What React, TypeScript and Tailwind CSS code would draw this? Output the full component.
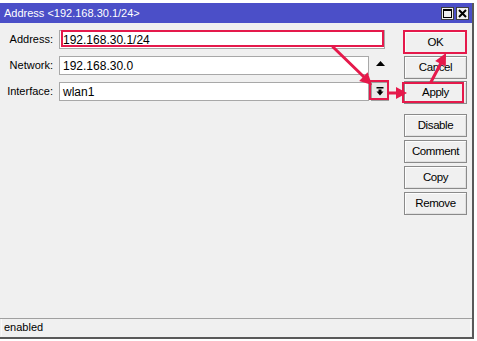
import React from "react";

const font = { fontFamily: '"Liberation Sans", Arial, sans-serif' };

function Btn({ label }: { label: string }) {
  return (
    <div className="h-[23px] w-[63px] flex items-center justify-center border border-[#8a8a8a] bg-[#f0f0f0] shadow-[inset_1px_1px_0_#fdfdfd,inset_-1px_-1px_0_#e0e0e0] text-[11.5px] tracking-[-0.4px] text-black">
      {label}
    </div>
  );
}

function Row({ label, children }: { label: string; children: React.ReactNode }) {
  return (
    <div className="flex items-center h-[19px]">
      <div className="w-[53px] text-right text-[11px] text-black">{label}</div>
      <div className="ml-[6px] flex items-center">{children}</div>
    </div>
  );
}

function Field({ value, w }: { value: string; w: string }) {
  return (
    <div className={`${w} h-[19px] bg-white border border-[#a8a8a8] flex items-center pl-[3px] text-[12px] text-black`}>
      {value}
    </div>
  );
}

export default function App() {
  return (
    <div className="relative w-[477px] h-[341px] bg-white overflow-hidden" style={font}>
      <div className="pt-[3px]">
        <div className="w-[474px] h-[336px] flex flex-col border-r-2 border-b-2 border-[#595959] bg-[#f0f0f0]">
          {/* Title bar */}
          <div className="h-[20px] bg-[#4b4fc8] flex items-start">
            <div className="pl-[4px] pt-[3px] text-white text-[11px] leading-[14px] flex-1">
              Address &lt;192.168.30.1/24&gt;
            </div>
            <div className="flex gap-[2px] pt-[4px] pr-[3px]">
              <div className="w-[13px] h-[13px] bg-[#f0f0f0] border border-[#404040] flex items-center justify-center">
                <svg width="9" height="9" viewBox="0 0 9 9">
                  <rect x="0.5" y="0.5" width="8" height="8" fill="none" stroke="#000" strokeWidth="1" />
                  <rect x="0" y="0" width="9" height="2" fill="#000" />
                </svg>
              </div>
              <div className="w-[13px] h-[13px] bg-[#f0f0f0] border border-[#404040] flex items-center justify-center">
                <svg width="9" height="9" viewBox="0 0 9 9">
                  <path d="M1 1 L8 8 M8 1 L1 8" stroke="#000" strokeWidth="2" />
                </svg>
              </div>
            </div>
          </div>

          {/* Main */}
          <div className="flex-1 flex">
            <div className="flex-1 flex flex-col gap-[7px] pt-[7px]">
              <Row label="Address:">
                <Field value="192.168.30.1/24" w="w-[326px]" />
              </Row>
              <Row label="Network:">
                <Field value="192.168.30.0" w="w-[310px]" />
                <div className="w-[20px] flex justify-center items-center ml-[1px] pb-[4px]">
                  <svg width="9" height="5" viewBox="0 0 9 5">
                    <path d="M0 5 L4.5 0 L9 5 Z" fill="#000" />
                  </svg>
                </div>
              </Row>
              <Row label="Interface:">
                <Field value="wlan1" w="w-[310px]" />
                <div className="ml-[2px] w-[18px] h-[19px] bg-[#e8e8e8] border border-[#a0a0a0] flex items-center justify-center">
                  <svg width="8" height="9" viewBox="0 0 8 9">
                    <rect x="0.5" y="0" width="7" height="1.5" fill="#000" />
                    <rect x="2.5" y="2.5" width="3" height="2.5" fill="#000" />
                    <path d="M0.5 4.5 L7.5 4.5 L4 8.5 Z" fill="#000" />
                  </svg>
                </div>
              </Row>
            </div>
            <div className="w-[68px] pt-[8px] flex flex-col">
              <div className="flex flex-col gap-[2px]">
                <Btn label="OK" />
                <Btn label="Cancel" />
                <Btn label="Apply" />
              </div>
              <div className="flex flex-col gap-[3px] mt-[10px]">
                <Btn label="Disable" />
                <Btn label="Comment" />
                <Btn label="Copy" />
                <Btn label="Remove" />
              </div>
            </div>
          </div>

          {/* Status */}
          <div className="border-t border-[#a0a0a0] pb-[1px]">
            <div className="h-[17px] ml-[1px] mr-[1px] border-l border-r border-[#fafafa] flex items-center pl-[2px] text-[11px] text-black">
              enabled
            </div>
          </div>
        </div>
      </div>

      {/* Annotations */}
      <svg className="absolute left-0 top-0 pointer-events-none" width="477" height="341" viewBox="0 0 477 341">
        <g stroke="#e5194b" fill="none" strokeWidth="2">
          <rect x="62" y="31" width="321" height="15" />
          <rect x="370" y="81" width="18" height="18" />
          <rect x="404" y="31" width="62" height="22" />
          <rect x="403" y="83" width="60" height="19" />
        </g>
        <g stroke="#e5194b" strokeWidth="3" strokeLinecap="round">
          <line x1="333" y1="47" x2="364" y2="77" />
          <line x1="389" y1="93" x2="397" y2="93" />
          <line x1="431" y1="82" x2="441" y2="63" />
        </g>
        <g fill="#e5194b">
          <polygon points="372,85 359.2,80.9 367.6,72.3" />
          <polygon points="407,93 396,87 396,99" />
          <polygon points="446,53 445.8,66.5 435.2,60.9" />
        </g>
      </svg>
    </div>
  );
}
